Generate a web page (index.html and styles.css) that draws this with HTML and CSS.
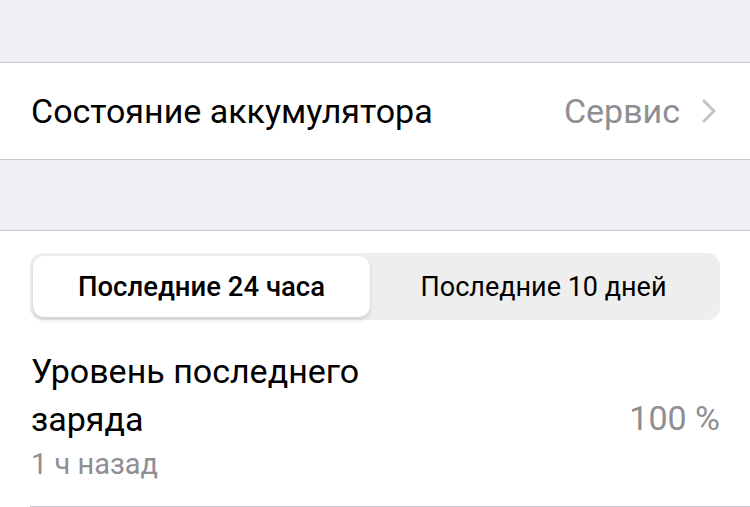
FILE: index.html
```html
<!DOCTYPE html>
<html lang="ru">
<head>
    <meta charset="UTF-8">
    <meta name="viewport" content="width=device-width, initial-scale=1.0">
    <title>Аккумулятор</title>
    <link rel="stylesheet" href="styles.css">
</head>
<body>

    <div class="gap gap-top"></div>

    <div class="group">
        <div class="row">
            <span class="row-title">Состояние аккумулятора</span>
            <span class="row-value">Сервис</span>
            <svg class="chevron" width="14" height="24" viewBox="0 0 14 24">
                <path d="M2 2 L12 12 L2 22" fill="none" stroke="#c4c4c8" stroke-width="3" stroke-linecap="round" stroke-linejoin="round"/>
            </svg>
        </div>
    </div>

    <div class="gap gap-mid"></div>

    <div class="group group-last">
        <div class="segments">
            <div class="segment active">Последние 24 часа</div>
            <div class="segment">Последние 10 дней</div>
        </div>

        <div class="level">
            <div class="level-text">
                <div class="level-title">Уровень последнего<br>заряда</div>
                <div class="level-time">1 ч назад</div>
            </div>
            <div class="level-value">100 %</div>
        </div>
        <div class="divider"></div>
    </div>

</body>
</html>
```

FILE: styles.css
```css
body {
    margin: 0;
    padding: 0;
    background: #efeff4;
    font-family: Roboto, "Noto Sans", sans-serif;
    color: #000;
}

.gap {
    background: #efeff4;
}

.gap-top {
    height: 62px;
}

.gap-mid {
    height: 70px;
}

.group {
    background: #fff;
    border-top: 1px solid #c8c7cc;
    border-bottom: 1px solid #c8c7cc;
}

.group-last {
    border-bottom: none;
    height: 300px;
}

.row {
    display: flex;
    align-items: center;
    height: 96px;
    padding: 0 34px 0 31px;
    font-size: 34px;
}

.row-title {
    flex: 1;
}

.row-value {
    color: #8e8e93;
    margin-right: 22px;
}

.chevron {
    display: block;
}

.segments {
    display: flex;
    margin: 22px 30px 0 30px;
    height: 67px;
    padding: 3px;
    box-sizing: border-box;
    background: #eeeeef;
    border-radius: 13px;
}

.segment {
    flex: 1;
    display: flex;
    align-items: center;
    justify-content: center;
    font-size: 27px;
    color: #000;
}

.segment.active {
    flex: 0 0 337px;
    background: #fff;
    border-radius: 11px;
    font-weight: 500;
    font-size: 27.5px;
    box-shadow: 0 3px 4px rgba(0, 0, 0, 0.12), 0 0 1px rgba(0, 0, 0, 0.08);
}

.level {
    display: flex;
    align-items: center;
    padding: 27px 30px 0 31px;
}

.level-text {
    flex: 1;
}

.level-title {
    font-size: 34px;
    line-height: 48px;
}

.level-time {
    font-size: 29px;
    line-height: 34px;
    color: #8e8e93;
    margin-top: 4px;
}

.level-value {
    font-size: 34px;
    color: #8e8e93;
    margin-top: 8px;
}

.divider {
    margin: 25px 0 0 30px;
    border-top: 1px solid #c8c7cc;
}
```
